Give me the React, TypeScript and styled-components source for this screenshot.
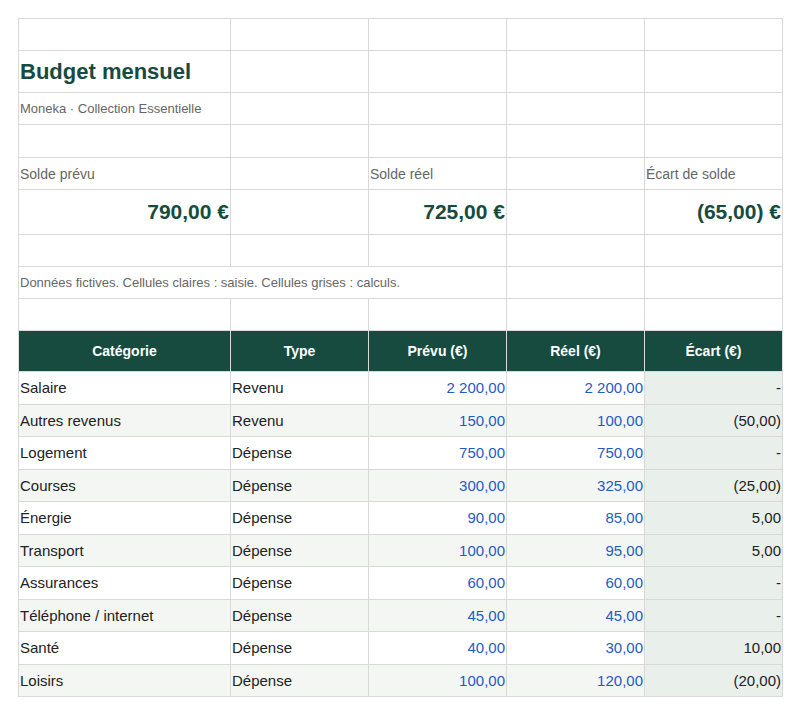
import React from "react";
import styled, { createGlobalStyle } from "styled-components";

const Global = createGlobalStyle`
  body { margin: 0; background: #fff; font-family: "Liberation Sans", Arial, sans-serif; }
`;

const Page = styled.div`
  padding: 18px 18px 0 18px;
`;

const Sheet = styled.table`
  border-collapse: collapse;
  width: 764px;
  table-layout: fixed;
  td, th { border: 1px solid #d9d9d9; padding: 0 1px; overflow: visible; white-space: nowrap; }
`;

const Row = styled.tr<{ $h: number; $alt?: boolean }>`
  height: ${(p) => p.$h}px;
  background: ${(p) => (p.$alt ? "#f3f6f3" : "#fff")};
`;

const Title = styled.td`
  font-size: 22px;
  font-weight: bold;
  color: #174b3f;
`;

const Sub = styled.td`
  font-size: 13px;
  color: #666;
`;

const Label = styled.td`
  font-size: 14px;
  color: #666;
`;

const Big = styled.td`
  font-size: 21px;
  font-weight: bold;
  color: #174b3f;
  text-align: right;
`;

const Head = styled.th`
  background: #174b3f;
  color: #fff;
  font-size: 14px;
  font-weight: bold;
  text-align: center;
`;

const Cell = styled.td<{ $num?: boolean; $calc?: boolean }>`
  font-size: 15px;
  color: ${(p) => (p.$num ? "#1f5bc4" : "#222")};
  text-align: ${(p) => (p.$num || p.$calc ? "right" : "left")};
  ${(p) => (p.$calc ? "background: #e9efeb; color: #222;" : "")}
`;

const data: [string, string, string, string, string][] = [
  ["Salaire", "Revenu", "2 200,00", "2 200,00", "-"],
  ["Autres revenus", "Revenu", "150,00", "100,00", "(50,00)"],
  ["Logement", "Dépense", "750,00", "750,00", "-"],
  ["Courses", "Dépense", "300,00", "325,00", "(25,00)"],
  ["Énergie", "Dépense", "90,00", "85,00", "5,00"],
  ["Transport", "Dépense", "100,00", "95,00", "5,00"],
  ["Assurances", "Dépense", "60,00", "60,00", "-"],
  ["Téléphone / internet", "Dépense", "45,00", "45,00", "-"],
  ["Santé", "Dépense", "40,00", "30,00", "10,00"],
  ["Loisirs", "Dépense", "100,00", "120,00", "(20,00)"],
];

const Empty = () => (
  <>
    <td /><td /><td /><td />
  </>
);

export default function App() {
  return (
    <Page>
      <Global />
      <Sheet>
        <colgroup>
          <col style={{ width: 212 }} />
          <col style={{ width: 138 }} />
          <col style={{ width: 138 }} />
          <col style={{ width: 138 }} />
          <col style={{ width: 138 }} />
        </colgroup>
        <tbody>
          <Row $h={32}><td /><Empty /></Row>
          <Row $h={42}><Title>Budget mensuel</Title><Empty /></Row>
          <Row $h={32}><Sub>Moneka · Collection Essentielle</Sub><Empty /></Row>
          <Row $h={33}><td /><Empty /></Row>
          <Row $h={32}>
            <Label>Solde prévu</Label><td /><Label>Solde réel</Label><td /><Label>Écart de solde</Label>
          </Row>
          <Row $h={45}>
            <Big>790,00 €</Big><td /><Big>725,00 €</Big><td /><Big>(65,00) €</Big>
          </Row>
          <Row $h={32}><td /><Empty /></Row>
          <Row $h={32}>
            <Sub colSpan={3}>Données fictives. Cellules claires : saisie. Cellules grises : calculs.</Sub><td /><td />
          </Row>
          <Row $h={32}><td /><Empty /></Row>
          <Row $h={41}>
            <Head>Catégorie</Head><Head>Type</Head><Head>Prévu (€)</Head><Head>Réel (€)</Head><Head>Écart (€)</Head>
          </Row>
          {data.map((r, i) => (
            <Row key={r[0]} $h={32.5} $alt={i % 2 === 1}>
              <Cell>{r[0]}</Cell>
              <Cell>{r[1]}</Cell>
              <Cell $num>{r[2]}</Cell>
              <Cell $num>{r[3]}</Cell>
              <Cell $calc>{r[4]}</Cell>
            </Row>
          ))}
        </tbody>
      </Sheet>
    </Page>
  );
}
